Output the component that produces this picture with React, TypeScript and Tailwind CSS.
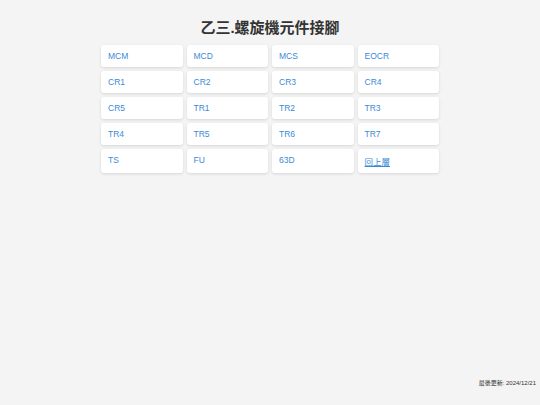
const ITEMS = [
  'MCM', 'MCD', 'MCS', 'EOCR',
  'CR1', 'CR2', 'CR3', 'CR4',
  'CR5', 'TR1', 'TR2', 'TR3',
  'TR4', 'TR5', 'TR6', 'TR7',
  'TS', 'FU', '63D',
]

export default function App() {
  return (
    <div
      className="min-h-[405px] bg-[#f4f4f4] flex flex-col text-[#333]"
      style={{ fontFamily: '"Liberation Sans", Arial, "Noto Sans CJK TC", sans-serif' }}
    >
      <div className="w-[338px] mx-auto pt-[19px]">
        <h1 className="text-center text-[15px] leading-[18px] font-bold mb-[8px]">
          乙三.螺旋機元件接腳
        </h1>

        <div className="grid grid-cols-4 gap-[4px]">
          {ITEMS.map((item) => (
            <div
              key={item}
              className="bg-white rounded-[3px] shadow-[0_1px_3px_rgba(0,0,0,0.12)] px-[7px] py-[6px]"
            >
              <a href="#" className="text-[8.5px] leading-[10px] text-[#3a8ad8] block">
                {item}
              </a>
            </div>
          ))}
          <div className="bg-white rounded-[3px] shadow-[0_1px_3px_rgba(0,0,0,0.12)] px-[7px] pt-[7px] pb-[5px]">
            <a href="#" className="text-[8.5px] leading-[12px] text-[#3a8ad8] underline block">
              回上層
            </a>
          </div>
        </div>
      </div>

      <footer className="mt-auto text-right pr-[4px] pb-[18px] text-[6px] leading-[8px] text-[#333]">
        最後更新: 2024/12/21
      </footer>
    </div>
  )
}
